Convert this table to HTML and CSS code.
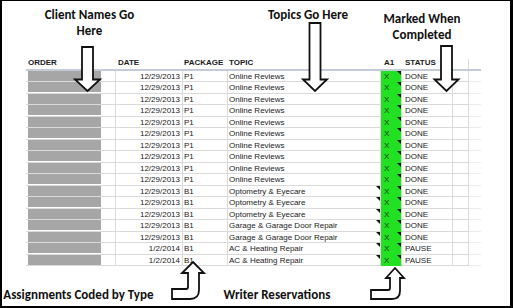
FILE: index.html
```html
<!DOCTYPE html>
<html>
<head>
<meta charset="utf-8">
<link rel="stylesheet" href="styles.css">
</head>
<body>
<div class="frame">
  <div class="top-notes">
    <div class="note note-client">Client Names Go<br>Here</div>
    <div class="note note-topics">Topics Go Here</div>
    <div class="note note-marked">Marked When<br>Completed</div>
  </div>
  <div class="sheet">
    <div class="row head">
      <div class="cell c-order">ORDER</div>
      <div class="cell c-date-h">DATE</div>
      <div class="cell c-pkg">PACKAGE</div>
      <div class="cell c-topic">TOPIC</div>
      <div class="cell c-a1h">A1</div>
      <div class="cell c-status">STATUS</div>
      <div class="cell c-x"></div>
      <div class="cell c-fade"></div>
    </div>
    <div class="row"><div class="cell c-order"><span class="redact"></span></div><div class="cell c-date">12/29/2013</div><div class="cell c-pkg">P1</div><div class="cell c-topic">Online Reviews</div><div class="cell c-a1 note-mark">X</div><div class="cell c-status">DONE</div><div class="cell c-x"></div><div class="cell c-fade"></div></div>
    <div class="row"><div class="cell c-order"><span class="redact"></span></div><div class="cell c-date">12/29/2013</div><div class="cell c-pkg">P1</div><div class="cell c-topic">Online Reviews</div><div class="cell c-a1 note-mark">X</div><div class="cell c-status">DONE</div><div class="cell c-x"></div><div class="cell c-fade"></div></div>
    <div class="row"><div class="cell c-order"><span class="redact"></span></div><div class="cell c-date">12/29/2013</div><div class="cell c-pkg">P1</div><div class="cell c-topic">Online Reviews</div><div class="cell c-a1 note-mark">X</div><div class="cell c-status">DONE</div><div class="cell c-x"></div><div class="cell c-fade"></div></div>
    <div class="row"><div class="cell c-order"><span class="redact"></span></div><div class="cell c-date">12/29/2013</div><div class="cell c-pkg">P1</div><div class="cell c-topic">Online Reviews</div><div class="cell c-a1 note-mark">X</div><div class="cell c-status">DONE</div><div class="cell c-x"></div><div class="cell c-fade"></div></div>
    <div class="row"><div class="cell c-order"><span class="redact"></span></div><div class="cell c-date">12/29/2013</div><div class="cell c-pkg">P1</div><div class="cell c-topic">Online Reviews</div><div class="cell c-a1 note-mark">X</div><div class="cell c-status">DONE</div><div class="cell c-x"></div><div class="cell c-fade"></div></div>
    <div class="row"><div class="cell c-order"><span class="redact"></span></div><div class="cell c-date">12/29/2013</div><div class="cell c-pkg">P1</div><div class="cell c-topic">Online Reviews</div><div class="cell c-a1 note-mark">X</div><div class="cell c-status">DONE</div><div class="cell c-x"></div><div class="cell c-fade"></div></div>
    <div class="row"><div class="cell c-order"><span class="redact"></span></div><div class="cell c-date">12/29/2013</div><div class="cell c-pkg">P1</div><div class="cell c-topic">Online Reviews</div><div class="cell c-a1 note-mark">X</div><div class="cell c-status">DONE</div><div class="cell c-x"></div><div class="cell c-fade"></div></div>
    <div class="row"><div class="cell c-order"><span class="redact"></span></div><div class="cell c-date">12/29/2013</div><div class="cell c-pkg">P1</div><div class="cell c-topic">Online Reviews</div><div class="cell c-a1 note-mark">X</div><div class="cell c-status">DONE</div><div class="cell c-x"></div><div class="cell c-fade"></div></div>
    <div class="row"><div class="cell c-order"><span class="redact"></span></div><div class="cell c-date">12/29/2013</div><div class="cell c-pkg">P1</div><div class="cell c-topic">Online Reviews</div><div class="cell c-a1 note-mark">X</div><div class="cell c-status">DONE</div><div class="cell c-x"></div><div class="cell c-fade"></div></div>
    <div class="row"><div class="cell c-order"><span class="redact"></span></div><div class="cell c-date">12/29/2013</div><div class="cell c-pkg">P1</div><div class="cell c-topic">Online Reviews</div><div class="cell c-a1 note-mark">X</div><div class="cell c-status">DONE</div><div class="cell c-x"></div><div class="cell c-fade"></div></div>
    <div class="row"><div class="cell c-order"><span class="redact"></span></div><div class="cell c-date">12/29/2013</div><div class="cell c-pkg">B1</div><div class="cell c-topic note-mark">Optometry &amp; Eyecare</div><div class="cell c-a1 note-mark">X</div><div class="cell c-status">DONE</div><div class="cell c-x"></div><div class="cell c-fade"></div></div>
    <div class="row"><div class="cell c-order"><span class="redact"></span></div><div class="cell c-date">12/29/2013</div><div class="cell c-pkg">B1</div><div class="cell c-topic note-mark">Optometry &amp; Eyecare</div><div class="cell c-a1 note-mark">X</div><div class="cell c-status">DONE</div><div class="cell c-x"></div><div class="cell c-fade"></div></div>
    <div class="row"><div class="cell c-order"><span class="redact"></span></div><div class="cell c-date">12/29/2013</div><div class="cell c-pkg">B1</div><div class="cell c-topic note-mark">Optometry &amp; Eyecare</div><div class="cell c-a1 note-mark">X</div><div class="cell c-status">DONE</div><div class="cell c-x"></div><div class="cell c-fade"></div></div>
    <div class="row"><div class="cell c-order"><span class="redact"></span></div><div class="cell c-date">12/29/2013</div><div class="cell c-pkg">B1</div><div class="cell c-topic note-mark">Garage &amp; Garage Door Repair</div><div class="cell c-a1 note-mark">X</div><div class="cell c-status">DONE</div><div class="cell c-x"></div><div class="cell c-fade"></div></div>
    <div class="row"><div class="cell c-order"><span class="redact"></span></div><div class="cell c-date">12/29/2013</div><div class="cell c-pkg">B1</div><div class="cell c-topic note-mark">Garage &amp; Garage Door Repair</div><div class="cell c-a1 note-mark">X</div><div class="cell c-status">DONE</div><div class="cell c-x"></div><div class="cell c-fade"></div></div>
    <div class="row"><div class="cell c-order"><span class="redact"></span></div><div class="cell c-date">1/2/2014</div><div class="cell c-pkg">B1</div><div class="cell c-topic note-mark">AC &amp; Heating Repair</div><div class="cell c-a1 note-mark">X</div><div class="cell c-status">PAUSE</div><div class="cell c-x"></div><div class="cell c-fade"></div></div>
    <div class="row"><div class="cell c-order"><span class="redact"></span></div><div class="cell c-date">1/2/2014</div><div class="cell c-pkg">B1</div><div class="cell c-topic note-mark">AC &amp; Heating Repair</div><div class="cell c-a1 note-mark">X</div><div class="cell c-status">PAUSE</div><div class="cell c-x"></div><div class="cell c-fade"></div></div>
  </div>
  <div class="bottom-notes">
    <div class="note note-assign">Assignments Coded by Type</div>
    <div class="note note-writer">Writer Reservations</div>
  </div>
</div>
<svg class="arrows" width="513" height="308" viewBox="0 0 513 308" aria-hidden="true">
  <g fill="#fff" stroke="#111" stroke-width="1.8" stroke-linejoin="miter">
    <path d="M82 47 H93 V79.5 H100 L87.5 91 L75 79.5 H82 Z"/>
    <path d="M309.5 23 H320.5 V79.5 H327 L315 91 L303 79.5 H309.5 Z"/>
    <path d="M441 46 H452 V79.5 H458.5 L446.5 91 L434.5 79.5 H441 Z"/>
    <path d="M193 262 L204 273 L199 273 L199 290 Q199 299 190 299 L172 299 L172 289 L186 289 Q188 289 188 287 L188 273 L182 273 Z"/>
    <path d="M395 268 L404 278 L400 278 L400 291 Q400 299 392 299 L371 299 L371 290 L388 290 Q390 290 390 288 L390 278 L386 278 Z"/>
  </g>
</svg>
</body>
</html>
```
FILE: styles.css
```css
* {
  box-sizing: border-box;
  margin: 0;
  padding: 0;
}

html,
body {
  width: 513px;
  height: 308px;
  overflow: hidden;
  background: #fff;
}

body {
  position: relative;
  font-family: "Liberation Sans", Arial, sans-serif;
}

.frame {
  width: 513px;
  height: 308px;
  border-style: solid;
  border-color: #000;
  border-width: 1px 3px 2px 2px;
  display: flex;
  flex-direction: column;
  background: #fff;
}

.top-notes {
  height: 57.5px;
  flex: none;
  display: flex;
  align-items: flex-start;
}

.note {
  font-family: Carlito, Lato, "Open Sans", sans-serif;
  font-weight: 700;
  font-size: 13px;
  line-height: 16px;
  color: #111;
  text-align: center;
  white-space: nowrap;
}

.note-client {
  width: 120px;
  margin-left: 27.5px;
  margin-top: 6px;
}

.note-topics {
  width: 120px;
  margin-left: 98.5px;
  margin-top: 6px;
}

.note-marked {
  width: 100px;
  margin-left: 4px;
  margin-top: 10px;
}

.sheet {
  flex: none;
  margin-left: 24px;
  width: 454.5px;
  font-size: 8px;
  color: #222;
}

.row {
  display: grid;
  grid-template-columns: 90px 66.5px 45px 153.5px 21px 50.5px 16px 12px;
  height: 11.5px;
}

.cell {
  position: relative;
  display: flex;
  align-items: center;
  white-space: nowrap;
  overflow: hidden;
  border-right: 1px solid #dadada;
  border-bottom: 1px solid #dadada;
  padding-top: 1px;
}

.head {
  height: 12px;
  border-bottom: 2px solid #c3cbd8;
  font-weight: 700;
  color: #1a1a1a;
}

.head .cell {
  border: none;
  padding-bottom: 3px;
}

.head .c-x {
  border-right: 1px solid #dadada;
}

.c-order {
  padding-left: 2px;
}

.c-date {
  justify-content: flex-end;
  padding-right: 1.5px;
}

.c-date-h {
  padding-left: 2px;
}

.c-pkg,
.c-topic {
  padding-left: 1.5px;
}

.c-a1,
.c-a1h {
  padding-left: 3px;
}

.c-a1 {
  background: #22e022;
  border-bottom-color: #22e022;
  color: #1c3a1c;
}

.c-status {
  padding-left: 3px;
}

.c-fade {
  border-right: none;
  border-bottom-color: #ececec;
}

.redact {
  display: block;
  width: 72.5px;
  height: 9.8px;
  margin-top: -1px;
  background: #a6a6a6;
}

.note-mark::after {
  content: "";
  position: absolute;
  top: 0;
  right: 0;
  border-style: solid;
  border-width: 0 4px 4px 0;
  border-color: transparent #111 transparent transparent;
}

.bottom-notes {
  flex: 1;
  display: flex;
  align-items: flex-start;
}

.note-assign {
  margin-left: 1.3px;
  margin-top: 20.5px;
}

.note-writer {
  margin-left: 70px;
  margin-top: 20.5px;
}

.arrows {
  position: absolute;
  top: 0;
  left: 0;
  pointer-events: none;
}
```
